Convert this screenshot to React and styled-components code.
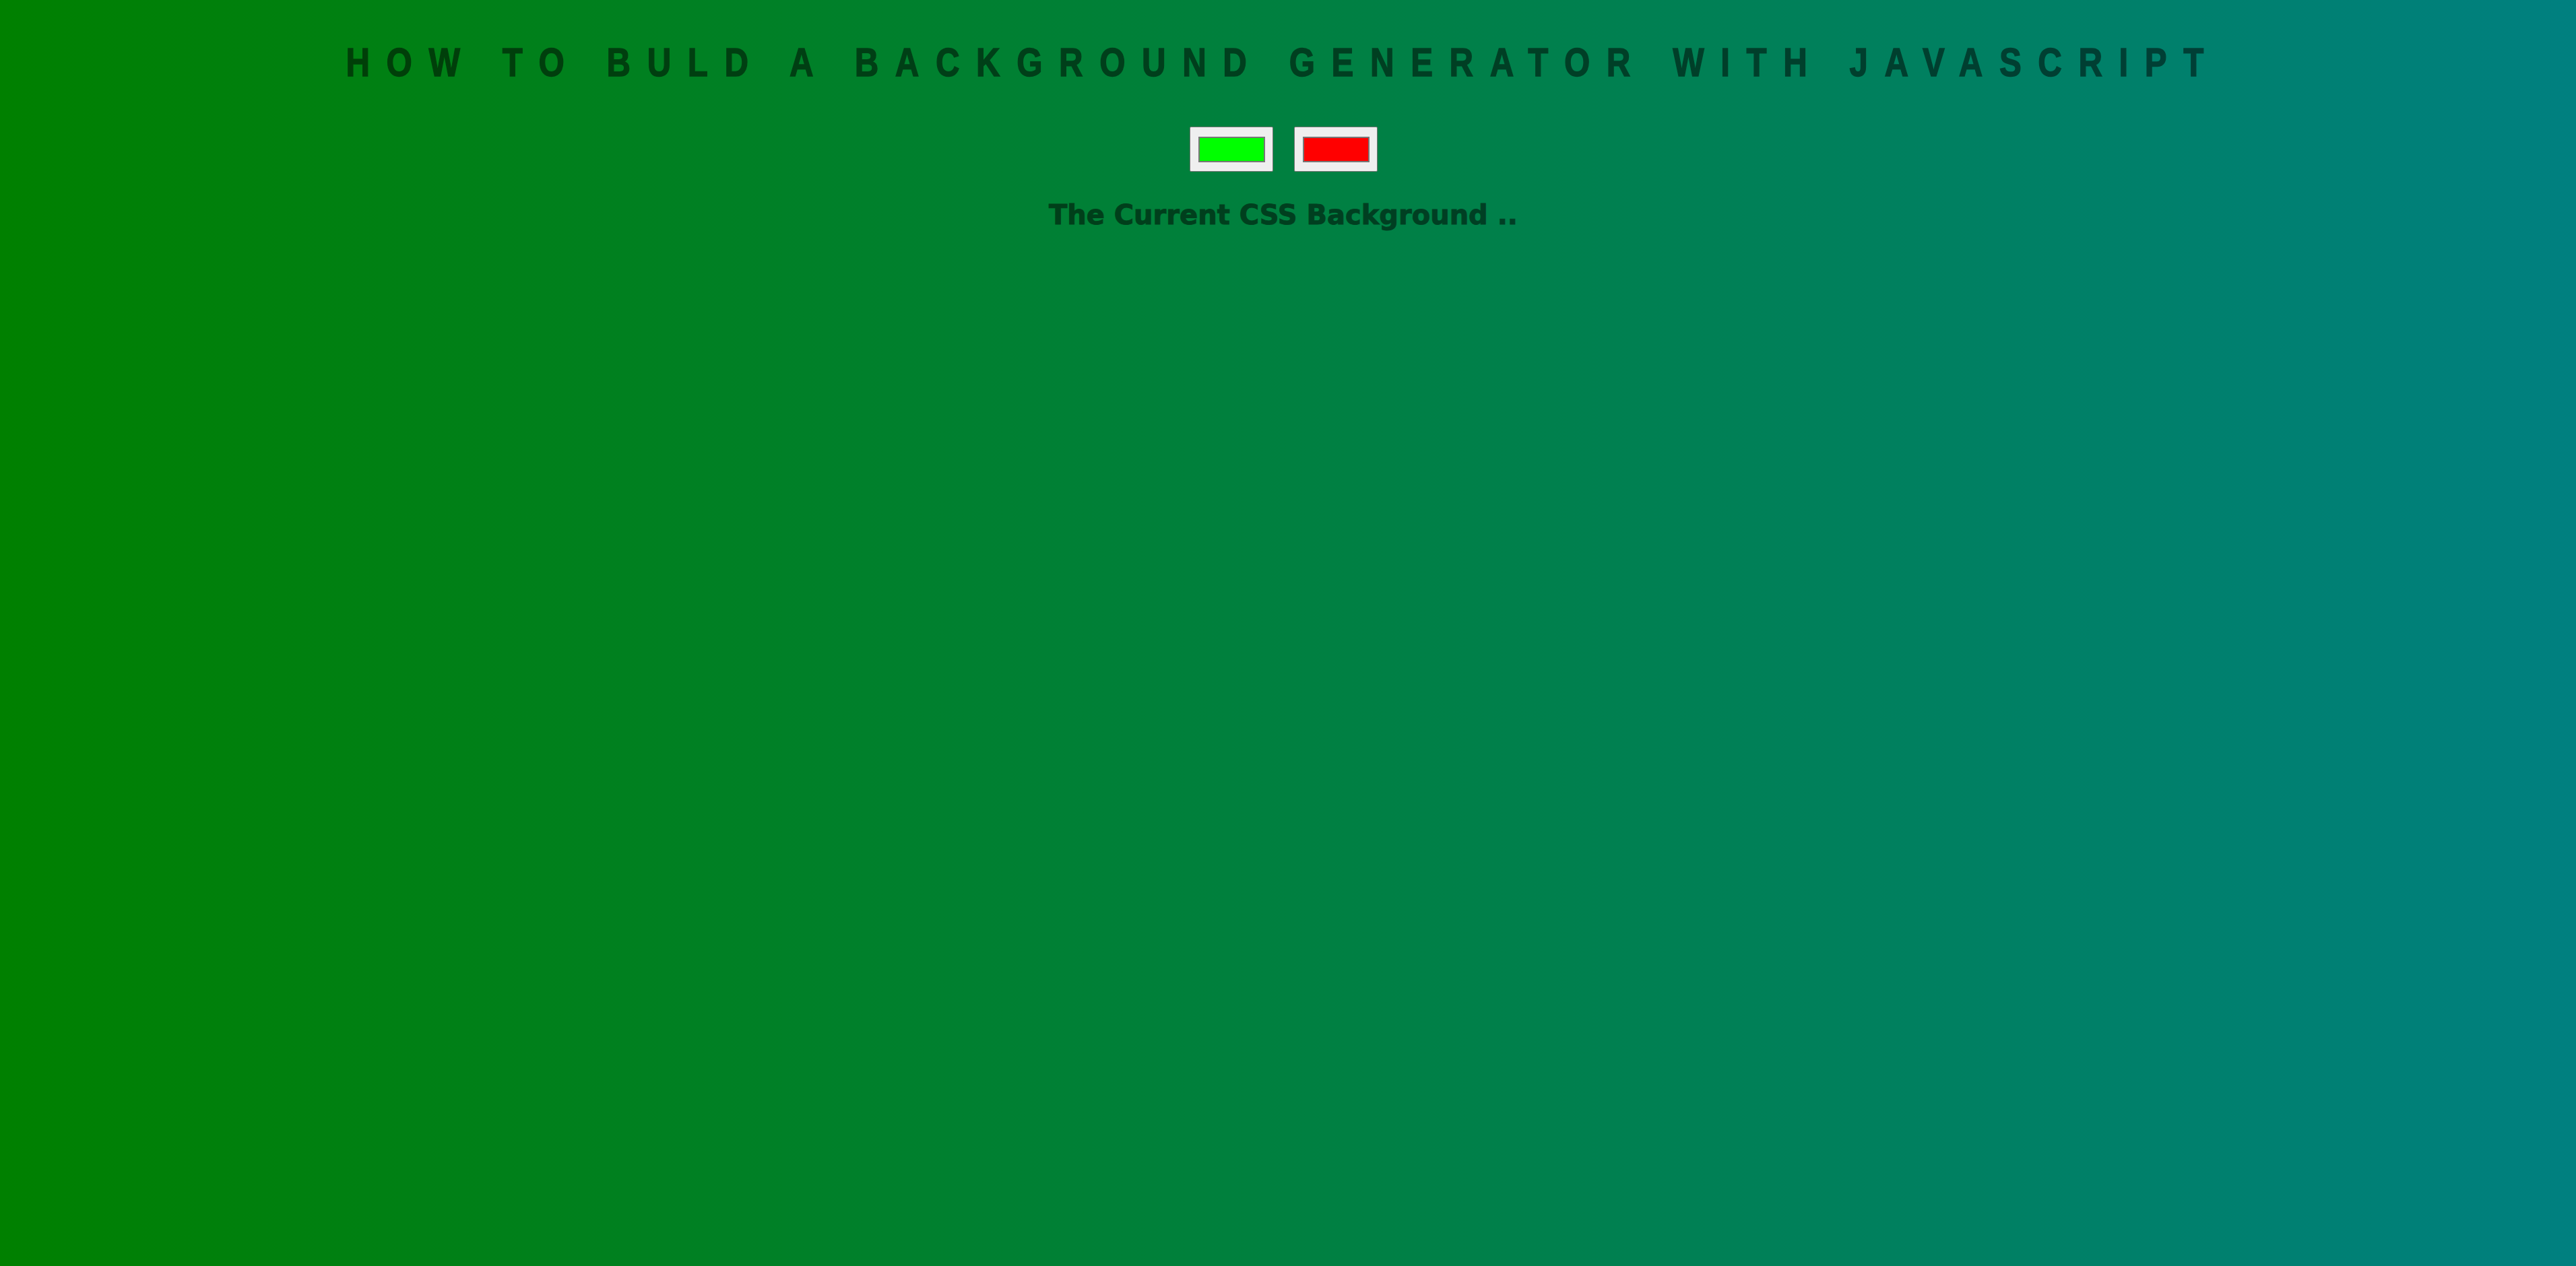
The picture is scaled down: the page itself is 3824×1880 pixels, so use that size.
import React from "react";
import styled, { createGlobalStyle } from "styled-components";

const GlobalStyle = createGlobalStyle`
  html, body {
    margin: 0;
    padding: 0;
  }
  body {
    font-family: "Liberation Sans", Arial, sans-serif;
  }
`;

const Page = styled.div`
  min-height: 100vh;
  box-sizing: border-box;
  padding: 63px 14px 0 0;
  background: linear-gradient(to right, #008000, #008080);
  text-align: center;
  color: #000;
`;

const Title = styled.h1`
  margin: 0;
  font-family: "Liberation Sans", Arial, sans-serif;
  font-size: 60px;
  line-height: 60px;
  font-weight: bold;
  letter-spacing: 30px;
  text-transform: uppercase;
`;

/* condensed bold face of the reference heading */
const Narrow = styled.span`
  display: inline-block;
  white-space: nowrap;
  transform: scaleX(0.82);
  transform-origin: center;
  -webkit-text-stroke: 1.5px #000;
  opacity: 0.5;
`;

const Pickers = styled.div`
  display: flex;
  justify-content: center;
  gap: 31px;
  margin-top: 65px;
`;

const ColorInput = styled.input.attrs({ type: "color" })`
  -webkit-appearance: none;
  appearance: none;
  box-sizing: border-box;
  width: 124px;
  height: 67px;
  margin: 0;
  padding: 0;
  border: 1px solid #767676;
  border-radius: 2px;
  background: #efefef;
  cursor: pointer;

  &::-webkit-color-swatch-wrapper {
    padding: 14px 11px 13px 12px;
  }
  &::-webkit-color-swatch {
    border: 2px solid #777777;
    border-radius: 0;
  }
`;

const Current = styled.h3`
  margin: 44px 0 0;
  font-family: "DejaVu Sans", Verdana, sans-serif;
  font-size: 40px;
  line-height: 40px;
  font-weight: bold;
  color: #000;
  -webkit-text-stroke: 1px #000;
  opacity: 0.5;
`;

export default function App() {
  return (
    <>
      <GlobalStyle />
      <Page>
        <Title>
          <Narrow>How to buld a background generator with javascript</Narrow>
        </Title>
        <Pickers>
          <ColorInput defaultValue="#00ff00" name="color1" />
          <ColorInput defaultValue="#ff0000" name="color2" />
        </Pickers>
        <Current>The Current CSS Background ..</Current>
      </Page>
    </>
  );
}
